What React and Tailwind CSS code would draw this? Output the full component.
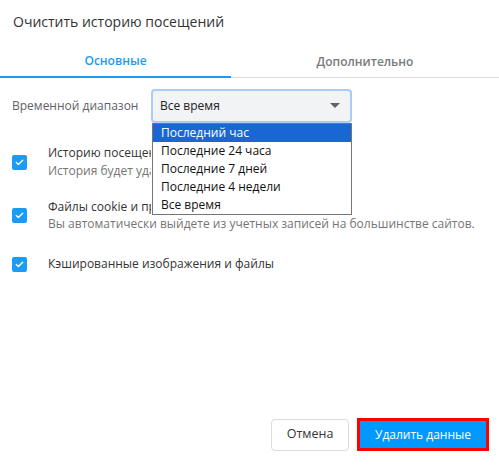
import React from 'react';

const font = { fontFamily: '"Open Sans", "Noto Sans", sans-serif' };

function Check() {
  return (
    <div className="w-[15px] h-[15px] rounded-[2px] bg-[#1a9bf5] flex items-center justify-center shrink-0">
      <svg width="11" height="11" viewBox="0 0 11 11" fill="none">
        <path d="M2.3 5.6 L4.4 7.6 L8.7 3.3" stroke="white" strokeWidth="1.4" strokeLinecap="round" strokeLinejoin="round" />
      </svg>
    </div>
  );
}

export default function App() {
  const options = ['Последний час', 'Последние 24 часа', 'Последние 7 дней', 'Последние 4 недели', 'Все время'];

  return (
    <div className="w-[499px] h-[465px] bg-white flex flex-col relative" style={font}>
      <h1 className="text-[14px] text-[#333] pl-[13px] pt-[11px] leading-[22px]">Очистить историю посещений</h1>

      {/* Вкладки */}
      <div className="flex mt-[13px] h-[32px]">
        <div className="w-[231px] h-[32px] flex items-center justify-center text-[12px] font-semibold text-[#1a9bf5] border-b-2 border-[#1a9bf5]">
          Основные
        </div>
        <div className="flex-1 h-[32px] flex items-center justify-center text-[12px] font-semibold text-[#7a7a7a] border-b border-[#dcdcdc]">
          Дополнительно
        </div>
      </div>

      <div className="flex items-center mt-[11px] pl-[12px]">
        <span className="text-[12px] text-[#5f6368] w-[139px]">Временной диапазон</span>
        <div className="relative">
          <div className="w-[201px] h-[34px] rounded-[4px] border-2 border-[#a9cdf7] bg-[#f1f3f4] flex items-center justify-between pl-[7px] pr-[10px] text-[12px] text-[#202124]">
            <span>Все время</span>
            <svg width="10" height="6" viewBox="0 0 10 6"><path d="M0 0 H10 L5 5 Z" fill="#5f6368" /></svg>
          </div>
          <div className="absolute left-[1px] top-[34px] w-[200px] border border-[#767676] bg-white z-10 text-[12px] text-[#111]">
            {options.map((o, i) => (
              <div key={o} className={'h-[18px] leading-[18px] pl-[8px] ' + (i === 0 ? 'bg-[#1a67d4] text-white' : '')}>{o}</div>
            ))}
          </div>
        </div>
      </div>

      <div className="flex flex-col pl-[12px] text-[12px]">
        <div className="flex items-center h-[36px] mt-[21px]">
          <Check />
          <div className="ml-[21px] leading-[18px]">
            <div className="w-[103px] overflow-hidden whitespace-nowrap text-[#333]">Историю посещений</div>
            <div className="w-[103px] overflow-hidden whitespace-nowrap text-[#757575]">История будет удалена</div>
          </div>
        </div>
        <div className="flex items-center h-[36px] mt-[17px]">
          <Check />
          <div className="ml-[21px] leading-[17px]">
            <div className="w-[103px] overflow-hidden whitespace-nowrap text-[#333]">Файлы cookie и прочие данные сайтов</div>
            <div className="whitespace-nowrap text-[#757575]">Вы автоматически выйдете из учетных записей на большинстве сайтов.</div>
          </div>
        </div>
        <div className="flex items-center h-[18px] mt-[22px]">
          <Check />
          <div className="ml-[21px] text-[#333]">Кэшированные изображения и файлы</div>
        </div>
      </div>

      <div className="flex-1" />

      <div className="flex justify-end items-center gap-[8px] pr-[10px] pb-[14px]">
        <button className="w-[78px] h-[32px] rounded-[4px] border border-[#dadce0] bg-white text-[12.5px] text-[#333]">Отмена</button>
        <button className="w-[132px] h-[33px] border-[3px] border-[#ff0000] bg-[#0299ff] text-[12px] font-medium text-white">Удалить данные</button>
      </div>
    </div>
  );
}
